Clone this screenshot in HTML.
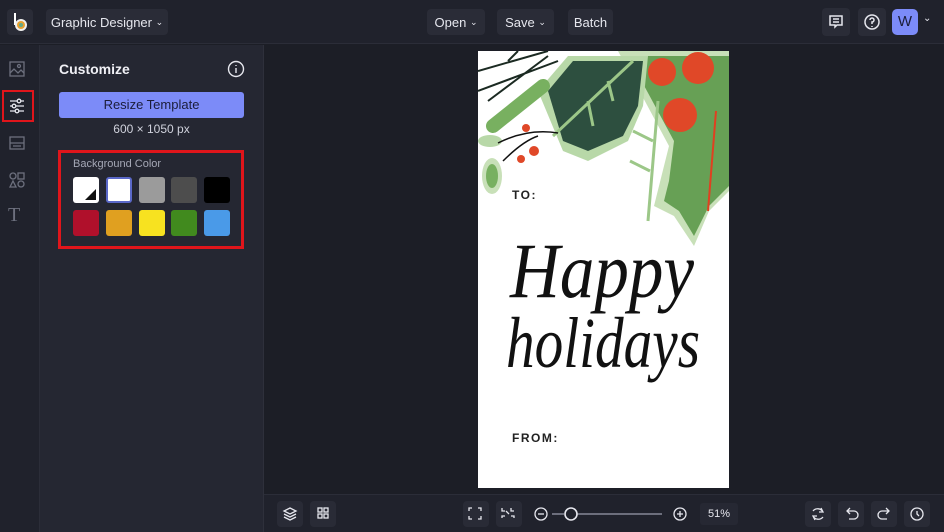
<!DOCTYPE html>
<html><head><style>
*{margin:0;padding:0;box-sizing:border-box}
body{width:944px;height:532px;overflow:hidden;background:#1c1e26;font-family:"Liberation Sans",sans-serif;color:#e6e7ee;position:relative}
.a{position:absolute}
.btn{position:absolute;background:#2a2c37;border-radius:4px;color:#e6e7ee;font-size:13px;display:flex;align-items:center;justify-content:center}
.ic{position:absolute;width:26px;height:26px;background:#292b36;border-radius:4px}
</style></head><body>
<div class="a" style="left:0;top:0;width:944px;height:44px;background:#20222c;border-bottom:1px solid #2b2d38"></div>
<div class="btn" style="left:7px;top:9px;width:26px;height:26px"><svg width="18" height="20" viewBox="0 0 18 20"><rect x="3" y="1" width="2" height="12" fill="#fff"/><circle cx="10" cy="13" r="6" fill="#f0f0f0"/><circle cx="10" cy="13" r="4" fill="#e8a030"/><circle cx="10" cy="13" r="2" fill="#6a8"/></svg></div>
<div class="btn" style="left:46px;top:9px;width:122px;height:26px">Graphic Designer&nbsp; <span style="font-size:9px">⌄</span></div>
<div class="btn" style="left:427px;top:9px;width:58px;height:26px">Open&nbsp; <span style="font-size:9px">⌄</span></div>
<div class="btn" style="left:497px;top:9px;width:57px;height:26px">Save&nbsp; <span style="font-size:9px">⌄</span></div>
<div class="btn" style="left:568px;top:9px;width:45px;height:26px">Batch</div>
<div class="btn" style="left:822px;top:8px;width:28px;height:28px"><svg width="16" height="16" viewBox="0 0 16 16" fill="none" stroke="#e6e7ee" stroke-width="1.5"><path d="M2 2h12v9H9l-2 2v-2H2z"/><path d="M5 5h6M5 8h6"/></svg></div>
<div class="btn" style="left:858px;top:8px;width:28px;height:28px"><svg width="18" height="18" viewBox="0 0 18 18" fill="none" stroke="#e6e7ee" stroke-width="1.5"><circle cx="9" cy="9" r="7"/><path d="M7 7a2 2 0 1 1 2 2v2M9 13v1"/></svg></div>
<div class="a" style="left:892px;top:9px;width:26px;height:26px;background:#7c8bf8;border-radius:5px;color:#1b1d3a;font-size:15px;text-align:center;line-height:26px">W</div>
<div class="a" style="left:923px;top:13px;font-size:10px">⌄</div>
<div class="a" style="left:0;top:45px;width:40px;height:487px;background:#20222c;border-right:1px solid #2b2d38"></div>
<div class="a" style="left:40px;top:45px;width:224px;height:487px;background:#252732;border-right:1px solid #2e303b"></div>
<svg class="a" style="left:8px;top:60px" width="18" height="18" viewBox="0 0 18 18" fill="none" stroke="#6d707e" stroke-width="1.3"><rect x="2" y="2" width="14" height="14"/><path d="M2 13l4-4 4 4 3-3 3 3"/><circle cx="11" cy="6" r="1.5"/></svg>
<div class="a" style="left:2px;top:90px;width:32px;height:32px;border:2px solid #e0151b"></div>
<svg class="a" style="left:8px;top:97px" width="18" height="18" viewBox="0 0 18 18" fill="none" stroke="#e6e7ee" stroke-width="1.3"><path d="M2 4h14M2 9h14M2 14h14"/><circle cx="11" cy="4" r="1.8" fill="#20222c"/><circle cx="6" cy="9" r="1.8" fill="#20222c"/><circle cx="9" cy="14" r="1.8" fill="#20222c"/></svg>
<svg class="a" style="left:8px;top:135px" width="18" height="16" viewBox="0 0 18 16" fill="none" stroke="#6d707e" stroke-width="1.3"><rect x="2" y="2" width="14" height="12"/><path d="M2 8h14M5 11h8"/></svg>
<svg class="a" style="left:8px;top:171px" width="18" height="18" viewBox="0 0 18 18" fill="none" stroke="#6d707e" stroke-width="1.3"><circle cx="5" cy="5" r="3"/><rect x="10" y="2" width="6" height="6"/><path d="M5 10l3 6H2z"/><circle cx="13" cy="13" r="3"/></svg>
<div class="a" style="left:8px;top:204px;font-size:20px;color:#6d707e;font-family:'Liberation Serif',serif">T</div>
<div class="a" style="left:59px;top:61px;font-size:14px;font-weight:bold;color:#f0f0f5">Customize</div>
<svg class="a" style="left:227px;top:60px" width="18" height="18" viewBox="0 0 18 18" fill="none" stroke="#e6e7ee" stroke-width="1.4"><circle cx="9" cy="9" r="7.5"/><path d="M9 8v5M9 5v1"/></svg>
<div class="a" style="left:59px;top:92px;width:185px;height:26px;background:#7c8bf8;border-radius:3px;color:#1b1d3a;font-size:13px;text-align:center;line-height:26px">Resize Template</div>
<div class="a" style="left:59px;top:122px;width:185px;text-align:center;font-size:12px;color:#d0d2dc">600 × 1050 px</div>
<div class="a" style="left:58px;top:150px;width:186px;height:99px;border:3px solid #e0151b"></div>
<div class="a" style="left:73px;top:158px;font-size:11px;color:#a5a8b6">Background Color</div>
<div class="a" style="left:73px;top:177px;width:26px;height:26px;background:#fff;border-radius:3px;overflow:hidden"><div style="position:absolute;right:3px;bottom:3px;width:0;height:0;border-left:11px solid transparent;border-bottom:11px solid #111"></div></div>
<div class="a" style="left:106px;top:177px;width:26px;height:26px;background:#fff;border-radius:3px;border:2px solid #5a68c8"></div>
<div class="a" style="left:139px;top:177px;width:26px;height:26px;background:#9b9b9b;border-radius:3px"></div>
<div class="a" style="left:171px;top:177px;width:26px;height:26px;background:#4d4d4d;border-radius:3px"></div>
<div class="a" style="left:204px;top:177px;width:26px;height:26px;background:#000;border-radius:3px"></div>
<div class="a" style="left:73px;top:210px;width:26px;height:26px;background:#b0102b;border-radius:3px"></div>
<div class="a" style="left:106px;top:210px;width:26px;height:26px;background:#e0a020;border-radius:3px"></div>
<div class="a" style="left:139px;top:210px;width:26px;height:26px;background:#f7e220;border-radius:3px"></div>
<div class="a" style="left:171px;top:210px;width:26px;height:26px;background:#418a1e;border-radius:3px"></div>
<div class="a" style="left:204px;top:210px;width:26px;height:26px;background:#4a9ae8;border-radius:3px"></div>
<div class="a" style="left:478px;top:51px;width:251px;height:437px;background:#fff;overflow:hidden">
<svg width="251" height="437" viewBox="0 0 251 437">
<path d="M140 0h111v140l-20 20-15 35-20-30-20-10 5-20 10-40z" fill="#c8e0b8"/>
<path d="M150 5h101v130l-20 20-15 30-15-25-15-10 5-20 5-40z" fill="#67a055"/>
<path d="M180 50l-10 120M175 90l-20-10M172 120l-20-10" stroke="#9cc788" stroke-width="3"/>
<path d="M238 60l-8 100" stroke="#e04020" stroke-width="2"/>
<path d="M60 40l30-35h80l-5 50-15 35-40 20-25-10z" fill="#b8d8a8"/>
<path d="M70 40l25-30h70l-5 45-15 30-35 15-25-10z" fill="#2d4f3f"/>
<path d="M75 85l80-75M110 50l5 25M130 30l5 20" stroke="#9cc788" stroke-width="3"/>
<path d="M0 0h60l-20 40-40 20z" fill="#fff"/>
<path d="M0 20l70-20M0 40l80-30M10 50l60-45M30 10l10-10" stroke="#1b2a22" stroke-width="2"/>
<path d="M15 75l50-40" stroke="#78b060" stroke-width="14" stroke-linecap="round"/>
<ellipse cx="12" cy="90" rx="12" ry="6" fill="#b8d8a8"/>
<ellipse cx="14" cy="125" rx="10" ry="18" fill="#c8e0b8"/><ellipse cx="14" cy="125" rx="6" ry="12" fill="#78b060"/>
<path d="M20 92q30-15 60-10M25 110q20-20 35-25" stroke="#111" stroke-width="1.5" fill="none"/>
<circle cx="48" cy="77" r="4" fill="#e04828"/><circle cx="56" cy="100" r="5" fill="#e04828"/><circle cx="43" cy="108" r="4" fill="#e04828"/>
<circle cx="184" cy="21" r="14" fill="#e04828"/><circle cx="220" cy="17" r="16" fill="#e04828"/><circle cx="202" cy="64" r="17" fill="#e04828"/>
<text x="34" y="148" font-family="Liberation Sans" font-weight="bold" font-size="12" letter-spacing="1.5" fill="#222">TO:</text>
<text x="32" y="246" font-family="Liberation Serif" font-style="italic" font-size="78" textLength="184" lengthAdjust="spacingAndGlyphs" fill="#111">Happy</text>
<text x="28" y="316" font-family="Liberation Serif" font-style="italic" font-size="72" textLength="194" lengthAdjust="spacingAndGlyphs" fill="#111">holidays</text>
<text x="34" y="391" font-family="Liberation Sans" font-weight="bold" font-size="12" letter-spacing="1.5" fill="#222">FROM:</text>
</svg></div>
<div class="a" style="left:264px;top:494px;width:680px;height:38px;background:#20222c;border-top:1px solid #2b2d38"></div>
<div class="ic" style="left:277px;top:501px"></div><div class="ic" style="left:310px;top:501px"></div>
<div class="ic" style="left:463px;top:501px"></div><div class="ic" style="left:496px;top:501px"></div>
<div class="ic" style="left:805px;top:501px"></div><div class="ic" style="left:838px;top:501px"></div><div class="ic" style="left:871px;top:501px"></div><div class="ic" style="left:904px;top:501px"></div>
<svg class="a" style="left:264px;top:494px" width="680" height="38" fill="none" stroke="#e6e7ee" stroke-width="1.3">
<path d="M26 14l6 3-6 3-6-3zM20 20l6 3 6-3M20 23l6 3 6-3"/>
<rect x="54" y="14" width="4" height="4"/><rect x="60" y="14" width="4" height="4"/><rect x="54" y="20" width="4" height="4"/><rect x="60" y="20" width="4" height="4"/>
<path d="M205 17v-3h3M214 14h3v3M217 22v3h-3M208 25h-3v-3"/>
<path d="M238 14v3h3M250 17h-3v-3M238 24v-2h3M250 24v-2h-3M242 17l3 3"/>
<circle cx="277" cy="20" r="6"/><path d="M274 20h6"/>
<path d="M288 20h12M312 20h86" stroke="#9a9dab"/><circle cx="307" cy="20" r="6" fill="#20222c" stroke-width="1.6"/>
<circle cx="416" cy="20" r="6"/><path d="M413 20h6M416 17v6"/>
<path d="M549 17a6 6 0 0 1 10 1M559 23a6 6 0 0 1-10-1M557 14l2 4-4 0M551 26l-2-4 4 0"/>
<path d="M583 17h7a4 4 0 0 1 0 8h-5M586 14l-3 3 3 3"/>
<path d="M625 17h-7a4 4 0 0 0 0 8h5M622 14l3 3-3 3"/>
<circle cx="653" cy="20" r="6"/><path d="M653 17v3l2 2"/>
</svg>
<div class="a" style="left:700px;top:503px;width:38px;height:22px;background:#262833;border-radius:3px;font-size:11px;text-align:center;line-height:22px">51%</div>
</body></html>
